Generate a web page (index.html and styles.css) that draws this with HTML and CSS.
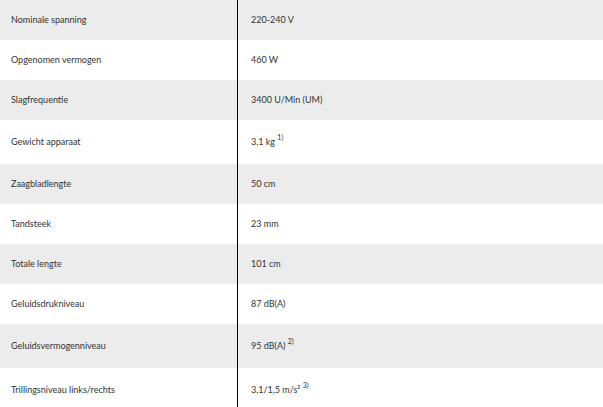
FILE: index.html
```html
<!DOCTYPE html>
<html lang="nl">
<head>
<meta charset="utf-8">
<title>Technische gegevens</title>
<link rel="stylesheet" href="styles.css">
</head>
<body>
<table class="specs">
  <tbody>
    <tr class="alt"><th>Nominale spanning</th><td>220-240 V</td></tr>
    <tr><th>Opgenomen vermogen</th><td>460 W</td></tr>
    <tr class="alt"><th>Slagfrequentie</th><td>3400 U/Min (UM)</td></tr>
    <tr class="tall"><th>Gewicht apparaat</th><td>3,1 kg <sup>1)</sup></td></tr>
    <tr class="alt"><th>Zaagbladlengte</th><td>50 cm</td></tr>
    <tr><th>Tandsteek</th><td>23 mm</td></tr>
    <tr class="alt"><th>Totale lengte</th><td>101 cm</td></tr>
    <tr><th>Geluidsdrukniveau</th><td>87 dB(A)</td></tr>
    <tr class="alt tall"><th>Geluidsvermogenniveau</th><td>95 dB(A) <sup>2)</sup></td></tr>
    <tr class="tall"><th>Trillingsniveau links/rechts</th><td>3,1/1,5 m/s² <sup>3)</sup></td></tr>
  </tbody>
</table>
</body>
</html>
```

FILE: styles.css
```css
html, body {
  margin: 0;
  padding: 0;
  background: #ffffff;
}

body {
  font-family: "Lato", "Open Sans", sans-serif;
  font-size: 9px;
  color: #333333;
}

.specs {
  width: 100%;
  border-collapse: collapse;
  border-spacing: 0;
}

.specs tr {
  height: 40px;
}

.specs tr.tall {
  height: 44px;
}

.specs tr.alt {
  background: #ececec;
}

.specs th,
.specs td {
  padding: 0;
  vertical-align: middle;
  text-align: left;
  font-weight: 400;
  line-height: 12px;
}

.specs th {
  width: 226px;
  padding-left: 11px;
  border-right: 1px solid #000000;
}

.specs td {
  padding-left: 13px;
}

.specs sup {
  font-size: 7px;
  line-height: 0;
  vertical-align: 5px;
}
```
